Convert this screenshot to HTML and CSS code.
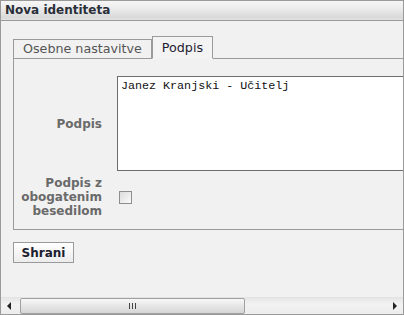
FILE: index.html
```html
<!DOCTYPE html>
<html lang="sl">
<head>
    <meta charset="UTF-8">
    <title>Nova identiteta</title>
    <link rel="stylesheet" href="styles.css">
</head>
<body>
    <div class="window">
        <div class="title">Nova identiteta</div>

        <div class="content">
            <div class="tabs">
                <div class="tab">Osebne nastavitve</div>
                <div class="tab active">Podpis</div>
            </div>

            <div class="panel">
                <label class="field-label" for="signature">Podpis</label>
                <textarea id="signature" class="signature">Janez Kranjski - Učitelj</textarea>

                <label class="field-label" for="html">Podpis z obogatenim besedilom</label>
                <div class="check-cell"><span class="checkbox" id="html"></span></div>
            </div>

            <button class="save">Shrani</button>
        </div>

        <div class="hscroll">
            <span class="arrow left"></span>
            <div class="thumb"><span class="grip"></span></div>
            <span class="arrow right"></span>
        </div>
    </div>
</body>
</html>
```

FILE: styles.css
```css
body {
    margin: 0;
    background: #f1f1f1;
    font-family: 'DejaVu Sans', Verdana, sans-serif;
    font-size: 12px;
}

.window {
    width: 404px;
    height: 315px;
    box-sizing: border-box;
    border: 1px solid #9a9a9a;
    display: flex;
    flex-direction: column;
    overflow: hidden;
}

.title {
    height: 19px;
    line-height: 19px;
    padding-left: 4px;
    border-bottom: 1px solid #9a9a9a;
    background: linear-gradient(#f6f6f6, #ececec 40%, #d9d9d9 85%, #e2e2e2);
    color: #2a2f3a;
    font-weight: bold;
}

.content {
    flex: 1;
    overflow: hidden;
    padding: 15px 0 0 12px;
}

.tabs {
    display: flex;
    align-items: flex-end;
    position: relative;
    z-index: 1;
}

.tab {
    height: 18px;
    line-height: 18px;
    padding: 0 9px;
    border: 1px solid #9a9a9a;
    background: #f1f1f1;
    color: #555;
    font-size: 12.7px;
    white-space: nowrap;
}

.tab.active {
    height: 21px;
    line-height: 21px;
    border-bottom-color: #f3f3f3;
    background: #f3f3f3;
    color: #1c2030;
}

.panel {
    width: 600px;
    margin-top: -1px;
    padding: 17px 0 11px;
    border: 1px solid #9a9a9a;
    border-right: 0;
    display: grid;
    grid-template-columns: 88px 1fr;
    column-gap: 15px;
    row-gap: 5px;
    align-items: center;
}

.field-label {
    text-align: right;
    font-weight: bold;
    color: #6a6a6a;
    line-height: 14px;
}

.signature {
    display: block;
    width: 420px;
    height: 95px;
    box-sizing: border-box;
    margin: 0;
    padding: 2px 3px;
    border: 1px solid #6d6d6d;
    background: #fff;
    resize: none;
    font-family: 'Liberation Mono', 'Courier New', monospace;
    font-size: 11.7px;
    color: #111;
}

.check-cell {
    display: flex;
}

.checkbox {
    width: 11px;
    height: 11px;
    margin-left: 2px;
    border: 1px solid #8e8e8e;
    background: linear-gradient(135deg, #dcdcdc, #fafafa);
}

.save {
    display: block;
    margin-top: 12px;
    width: 61px;
    height: 21px;
    padding: 0;
    border: 1px solid #9a9a9a;
    background: linear-gradient(#ffffff, #ececec);
    font-family: 'DejaVu Sans', Verdana, sans-serif;
    font-size: 12px;
    font-weight: bold;
    color: #1c2030;
}

.hscroll {
    height: 17px;
    box-sizing: border-box;
    border-top: 1px solid #e2e2e2;
    background: linear-gradient(#e6e6e6, #f2f2f2 40%, #ededed);
    display: flex;
    align-items: center;
    padding: 0 6px 0 6px;
}

.arrow {
    width: 0;
    height: 0;
    border-top: 4px solid transparent;
    border-bottom: 4px solid transparent;
}

.arrow.left {
    border-right: 4px solid #222;
}

.arrow.right {
    margin-left: auto;
    border-left: 4px solid #222;
}

.thumb {
    width: 223px;
    height: 14px;
    margin-left: 9px;
    border: 1px solid #a0a0a0;
    border-radius: 2px;
    background: linear-gradient(#f7f7f7, #e6e6e6 50%, #d6d6d6);
    display: flex;
    align-items: center;
    justify-content: center;
}

.grip {
    width: 7px;
    height: 6px;
    background: repeating-linear-gradient(90deg, #444 0 1px, transparent 1px 3px);
}
```
